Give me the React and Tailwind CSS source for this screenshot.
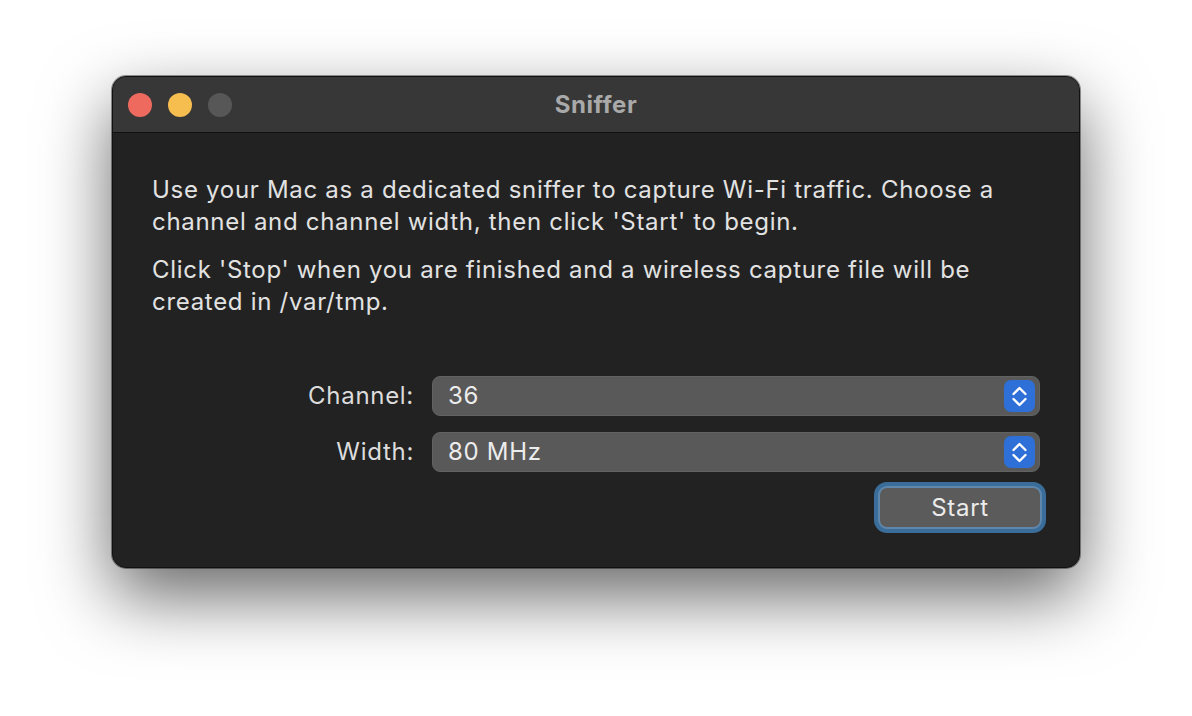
function Stepper() {
  return (
    <div className="w-[31px] h-[32px] rounded-[7px] bg-[#2f6fd8] shrink-0">
      <svg viewBox="0 0 31 32" className="w-[31px] h-[32px]" fill="none" stroke="white" strokeWidth="2.3" strokeLinecap="round" strokeLinejoin="round">
        <path d="M9.5 14 L15.5 8 L21.5 14" />
        <path d="M9.5 19 L15.5 25 L21.5 19" />
      </svg>
    </div>
  );
}

function PopupRow({ label, value }) {
  return (
    <div className="flex items-center">
      <div className="w-[280px] pr-[18px] text-right text-[24px] tracking-[0.7px] text-[#dcdcdc]">{label}</div>
      <div className="flex-1 h-[40px] rounded-[8px] bg-[#595959] border border-[#626262] flex items-center pl-[15px] pr-[4px]">
        <span className="flex-1 text-[24px] tracking-[0.7px] text-[#ececec]">{value}</span>
        <Stepper />
      </div>
    </div>
  );
}

export default function App() {
  return (
    <div
      className="w-[1192px] h-[716px] bg-white flex items-start justify-center pt-[76px]"
      style={{ fontFamily: 'Inter, "Noto Sans", sans-serif' }}
    >
      <div className="w-[968px] h-[492px] rounded-[14px] bg-[#222222] border border-[#111] overflow-hidden shadow-[0_28px_70px_rgba(0,0,0,0.6),0_0_0_1px_rgba(90,90,90,0.6)] flex flex-col">
        {/* Title bar */}
        <div className="relative h-[56px] bg-[#373737] border-b border-[#0f0f0f] flex items-center px-[15px] shrink-0">
          <div className="flex gap-[16px]">
            <div className="w-[24px] h-[24px] rounded-full bg-[#ee6a5f]" />
            <div className="w-[24px] h-[24px] rounded-full bg-[#f5be4f]" />
            <div className="w-[24px] h-[24px] rounded-full bg-[#575757]" />
          </div>
          <div className="absolute inset-0 flex items-center justify-center text-[24px] tracking-[0.5px] font-bold text-[#a9a9a9] pointer-events-none">
            Sniffer
          </div>
        </div>

        {/* Body */}
        <div className="flex-1 pl-[39px] pr-[39px] pt-[41px]">
          <p className="text-[24px] leading-[32px] tracking-[0.7px] text-[#e2e2e2] pr-[20px]">
            Use your Mac as a dedicated sniffer to capture Wi-Fi traffic. Choose a channel and channel width, then click 'Start' to begin.
          </p>
          <p className="mt-[16px] text-[24px] leading-[32px] tracking-[0.7px] text-[#e2e2e2] pr-[20px]">
            Click 'Stop' when you are finished and a wireless capture file will be created in /var/tmp.
          </p>

          <div className="mt-[58px] flex flex-col gap-[16px]">
            <PopupRow label="Channel:" value="36" />
            <PopupRow label="Width:" value="80 MHz" />
          </div>

          <div className="flex justify-end mt-[10px] -mr-[6px]">
            <div className="p-[4px] rounded-[13px] bg-[#3a6d9a]">
              <button className="w-[164px] h-[43px] rounded-[9px] bg-[#5b5b5b] border-2 border-[#5f86ab] text-[24px] tracking-[0.7px] text-[#ececec]">
                Start
              </button>
            </div>
          </div>
        </div>
      </div>
    </div>
  );
}
